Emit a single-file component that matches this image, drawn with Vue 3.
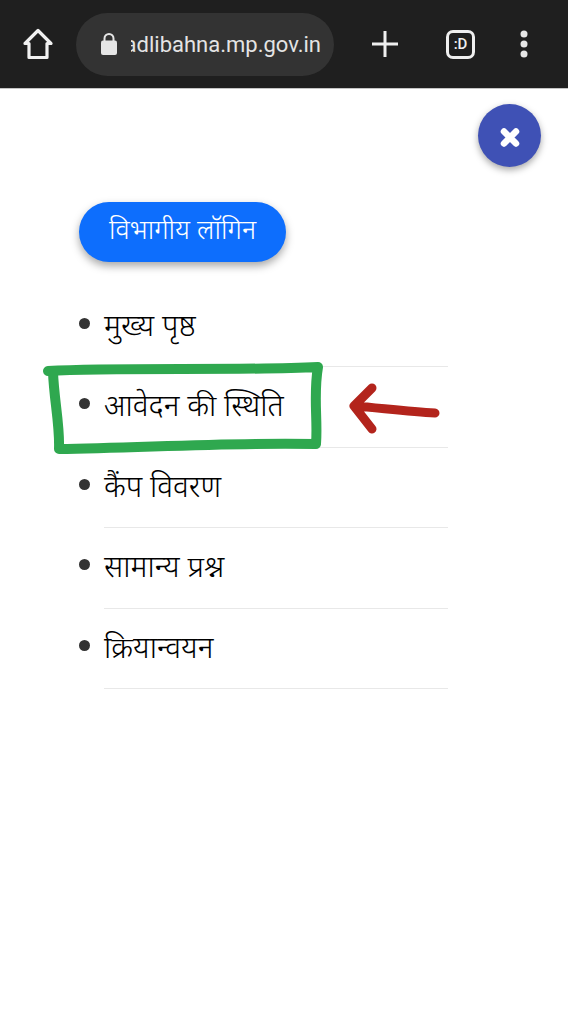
<template>
  <div class="page">
    <header class="toolbar">
      <svg class="home" width="32" height="34" viewBox="0 0 32 34">
        <path d="M3 16.500 16 3.500 29 16.500H25V30.500H7V16.500Z" fill="none" stroke="#f1f1f1" stroke-width="3.200" stroke-linejoin="round" />
      </svg>
      <div class="address">
        <svg class="lock" width="18" height="24" viewBox="0 0 18 24">
          <path d="M4.500 10V6.500a4.500 4.500 0 0 1 9 0V10" fill="none" stroke="#e6e6e6" stroke-width="2" />
          <rect x="1" y="8.500" width="16" height="14.500" rx="2" fill="#e6e6e6" />
        </svg>
        <div class="url"><span>sadlibahna.mp.gov.in</span></div>
      </div>
      <svg class="plus" width="26" height="26" viewBox="0 0 26 26">
        <path d="M13 0V26M0 13H26" stroke="#efefef" stroke-width="3" />
      </svg>
      <div class="tabs">:D</div>
      <svg class="dots" width="10" height="28" viewBox="0 0 10 28">
        <circle cx="5" cy="4" r="3.500" fill="#e6e6e6" />
        <circle cx="5" cy="14" r="3.500" fill="#e6e6e6" />
        <circle cx="5" cy="24" r="3.500" fill="#e6e6e6" />
      </svg>
    </header>

    <main class="menu">
      <a class="login">विभागीय लॉगिन</a>
      <ul class="links">
        <li v-for="item in items" :key="item">
          <span class="dot"></span>
          <a class="link">{{ item }}</a>
        </li>
      </ul>
    </main>

    <button class="close">
      <svg width="22" height="22" viewBox="0 0 22 22">
        <path d="M5 6.500 17 18.500M17 6.500 5 18.500" stroke="#fff" stroke-width="6.500" stroke-linecap="round" />
      </svg>
    </button>

    <!-- hand drawn marks on top of the screenshot -->
    <svg class="marks" width="568" height="1024" viewBox="0 0 568 1024">
      <path d="M48 371C120 367 240 371 318 367C313 395 318 420 316 444C230 442 140 448 59 449C60 425 54 400 53 372" fill="none" stroke="#2fa84f" stroke-width="10" stroke-linecap="round" stroke-linejoin="round" />
      <path d="M435 413C410 412 380 408 355 406M372 388 354 406 372 429" fill="none" stroke="#b3241c" stroke-width="9" stroke-linecap="round" stroke-linejoin="round" />
    </svg>
  </div>
</template>

<script setup>
const items = [
  "मुख्य पृष्ठ",
  "आवेदन की स्थिति",
  "कैंप विवरण",
  "सामान्य प्रश्न",
  "क्रियान्वयन",
];
</script>

<style>
body {
  margin: 0;
  background: #fff;
}
</style>

<style scoped>
.page {
  position: relative;
  width: 568px;
  height: 1024px;
  overflow: hidden;
  background: #fff;
  font-family: "Noto Sans", "Liberation Serif", serif;
}

.toolbar {
  display: flex;
  align-items: center;
  height: 89px;
  box-sizing: border-box;
  background: #1f1f1f;
  border-bottom: 1px solid #c4c4c4;
  padding-left: 22px;
}

.address {
  display: flex;
  align-items: center;
  width: 258px;
  height: 63px;
  margin-left: 22px;
  padding: 0 13px 0 24px;
  box-sizing: border-box;
  border-radius: 32px;
  background: #333333;
}

.lock {
  flex: none;
}

.url {
  flex: 1;
  display: flex;
  justify-content: flex-end;
  overflow: hidden;
  margin-left: 13px;
  color: #e4e4e4;
  font-family: Roboto, sans-serif;
  font-size: 22px;
  white-space: nowrap;
}

.plus {
  margin-left: 38px;
}

.tabs {
  width: 29px;
  height: 29px;
  margin-left: 48px;
  box-sizing: border-box;
  border: 3px solid #efefef;
  border-radius: 7px;
  color: #efefef;
  font-family: Roboto, sans-serif;
  font-size: 15px;
  font-weight: 500;
  line-height: 22px;
  text-align: center;
}

.dots {
  margin-left: 44px;
}

.menu {
  padding: 113px 120px 0 79px;
}

.login {
  display: inline-block;
  width: 207px;
  height: 60px;
  border-radius: 30px;
  background: #0d6efd;
  box-shadow: 0 4px 8px rgba(0, 0, 0, 0.35);
  color: #fff;
  font-size: 27px;
  font-weight: 300;
  line-height: 54px;
  text-align: center;
}

.links {
  margin: 25px 0 0;
  padding: 0;
  list-style: none;
}

.links li {
  display: flex;
}

.dot {
  flex: none;
  width: 11px;
  height: 11px;
  margin: 31px 14px 0 0;
  border-radius: 50%;
  background: #333;
}

.link {
  flex: 1;
  height: 80.400px;
  box-sizing: border-box;
  padding-top: 18px;
  border-bottom: 1px solid #e8e8e8;
  color: #000;
  font-size: 30px;
  font-weight: 300;
  line-height: 40px;
}

.close {
  position: absolute;
  top: 104px;
  left: 478px;
  display: flex;
  align-items: center;
  justify-content: center;
  width: 63px;
  height: 63px;
  padding: 0;
  border: none;
  border-radius: 50%;
  background: #3f51b5;
  box-shadow: 0 3px 7px rgba(0, 0, 0, 0.35);
}

.marks {
  position: absolute;
  top: 0;
  left: 0;
  pointer-events: none;
}
</style>
